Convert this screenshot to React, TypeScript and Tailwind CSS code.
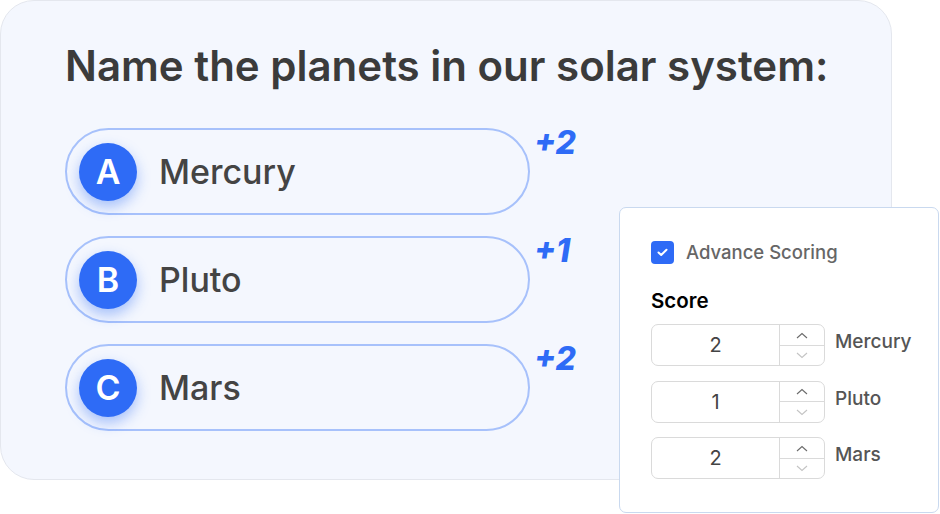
const options = [
  { letter: "A", name: "Mercury", points: "+2" },
  { letter: "B", name: "Pluto", points: "+1" },
  { letter: "C", name: "Mars", points: "+2" },
];

const Chevron = ({ up }: { up?: boolean }) => (
  <svg width="12" height="7" viewBox="0 0 12 7" fill="none">
    <path
      d={up ? "M1 6L6 1.5L11 6" : "M1 1L6 5.5L11 1"}
      stroke={up ? "#6b6b6b" : "#c4c4c4"}
      strokeWidth="1.1"
    />
  </svg>
);

const ScoreRow = ({ value, label }: { value: number; label: string }) => (
  <div className="flex items-start gap-[10px]">
    <div className="flex w-[174px] h-[42px] border border-[#dadada] rounded-[7px] bg-white">
      <div className="flex-1 flex items-center justify-center text-[20px] text-[#444]">{value}</div>
      <div className="w-[45px] flex flex-col border-l border-[#dadada]">
        <div className="flex-1 flex items-center justify-center border-b border-[#dadada]">
          <Chevron up />
        </div>
        <div className="flex-1 flex items-center justify-center">
          <Chevron />
        </div>
      </div>
    </div>
    <span className="text-[19px] font-medium text-[#555] leading-none mt-[8px]">{label}</span>
  </div>
);

export default function App() {
  return (
    <div className="relative w-[940px] h-[514px] bg-white font-['Inter',sans-serif] overflow-hidden">
      <div className="w-[892px] h-[480px] bg-[#f4f7fe] border border-[#e4e7ee] rounded-[34px] pl-[64px] pt-[39px]">
        <h1 className="text-[42px] leading-[52px] font-semibold text-[#3b3b3b]">
          Name the planets in our solar system:
        </h1>
        <div className="flex flex-col gap-[21px] mt-[36px]">
          {options.map((o) => (
            <div key={o.letter} className="flex items-start">
              <div className="w-[465px] h-[87px] border-2 border-[#a7c1fb] rounded-full flex items-center pl-[12px]">
                <div className="w-[58px] h-[58px] rounded-full bg-[#2e6bf6] shadow-[0_6px_14px_rgba(46,107,246,0.4)] flex items-center justify-center text-white text-[34px] font-semibold">
                  {o.letter}
                </div>
                <span className="ml-[22px] text-[34px] font-medium text-[#444]">{o.name}</span>
              </div>
              <span className="ml-[4px] -mt-[3px] text-[32px] font-extrabold italic text-[#2e6bf6] leading-[36px]">
                {o.points}
              </span>
            </div>
          ))}
        </div>
      </div>

      <div className="absolute left-[619px] top-[207px] w-[320px] h-[306px] bg-white border border-[#c9d9ef] rounded-[7px] pl-[31px] pt-[31px]">
        <div className="flex items-center gap-[12px]">
          <div className="w-[23px] h-[23px] rounded-[4px] bg-[#2e6bf6] flex items-center justify-center">
            <svg width="11" height="9" viewBox="0 0 11 9" fill="none">
              <path d="M1.5 4.5L4.2 7L9.5 1.8" stroke="white" strokeWidth="2" strokeLinecap="round" strokeLinejoin="round" />
            </svg>
          </div>
          <span className="text-[18.5px] font-medium text-[#666]">Advance Scoring</span>
        </div>
        <div className="mt-[24px] text-[20.5px] font-semibold text-black leading-none">Score</div>
        <div className="flex flex-col gap-[14.5px] mt-[13px]">
          <ScoreRow value={2} label="Mercury" />
          <ScoreRow value={1} label="Pluto" />
          <ScoreRow value={2} label="Mars" />
        </div>
      </div>
    </div>
  );
}
